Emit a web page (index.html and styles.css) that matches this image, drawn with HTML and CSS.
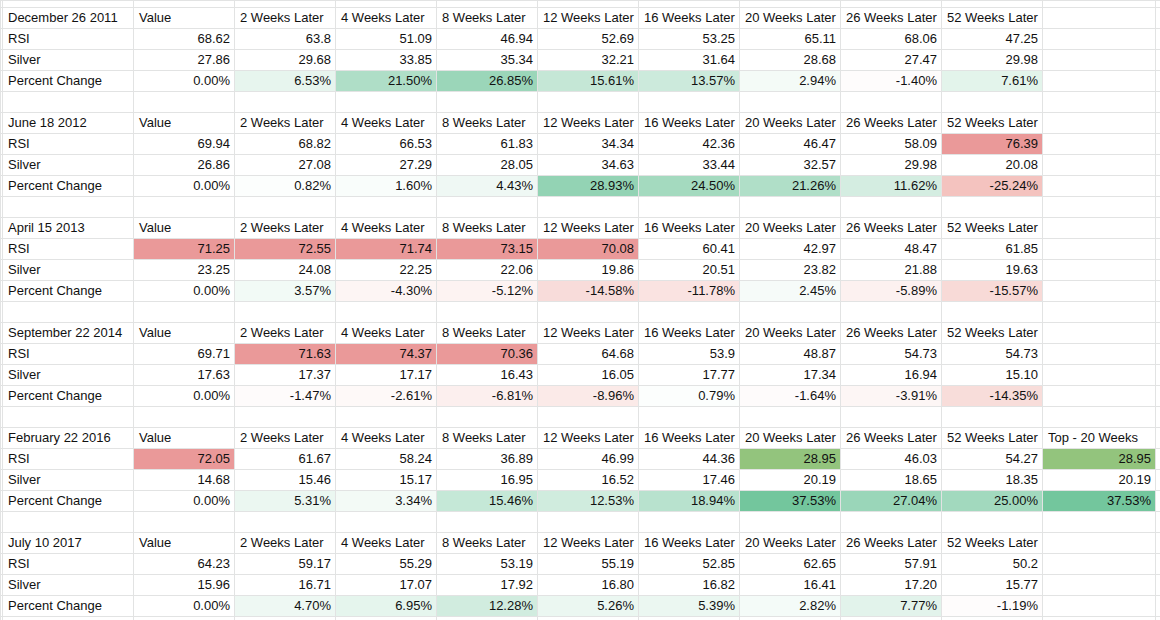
FILE: index.html
```html
<!DOCTYPE html>
<html>
<head>
<meta charset="utf-8">
<link rel="stylesheet" href="styles.css">
</head>
<body>
<div class="sheet">
<table class="grid">
<colgroup>
<col class="c-edge"><col class="c-label"><col class="c-num"><col class="c-num"><col class="c-num"><col class="c-num"><col class="c-num"><col class="c-num"><col class="c-num"><col class="c-num"><col class="c-num"><col class="c-wide"><col class="c-rest">
</colgroup>
<tbody>
<tr class="cut"><td></td><td></td><td></td><td></td><td></td><td></td><td></td><td></td><td></td><td></td><td></td><td></td><td></td></tr>

<tr><td></td><td>December 26 2011</td><td>Value</td><td>2 Weeks Later</td><td>4 Weeks Later</td><td>8 Weeks Later</td><td>12 Weeks Later</td><td>16 Weeks Later</td><td>20 Weeks Later</td><td>26 Weeks Later</td><td>52 Weeks Later</td><td></td><td></td></tr>
<tr><td></td><td>RSI</td><td class="n">68.62</td><td class="n">63.8</td><td class="n">51.09</td><td class="n">46.94</td><td class="n">52.69</td><td class="n">53.25</td><td class="n">65.11</td><td class="n">68.06</td><td class="n">47.25</td><td></td><td></td></tr>
<tr><td></td><td>Silver</td><td class="n">27.86</td><td class="n">29.68</td><td class="n">33.85</td><td class="n">35.34</td><td class="n">32.21</td><td class="n">31.64</td><td class="n">28.68</td><td class="n">27.47</td><td class="n">29.98</td><td></td><td></td></tr>
<tr><td></td><td>Percent Change</td><td class="n">0.00%</td><td class="n g" style="--g:14.5%">6.53%</td><td class="n g" style="--g:47.8%">21.50%</td><td class="n g" style="--g:59.7%">26.85%</td><td class="n g" style="--g:34.7%">15.61%</td><td class="n g" style="--g:30.2%">13.57%</td><td class="n g" style="--g:6.5%">2.94%</td><td class="n r" style="--r:2.5%">-1.40%</td><td class="n g" style="--g:16.9%">7.61%</td><td></td><td></td></tr>
<tr><td></td><td></td><td></td><td></td><td></td><td></td><td></td><td></td><td></td><td></td><td></td><td></td><td></td></tr>

<tr><td></td><td>June 18 2012</td><td>Value</td><td>2 Weeks Later</td><td>4 Weeks Later</td><td>8 Weeks Later</td><td>12 Weeks Later</td><td>16 Weeks Later</td><td>20 Weeks Later</td><td>26 Weeks Later</td><td>52 Weeks Later</td><td></td><td></td></tr>
<tr><td></td><td>RSI</td><td class="n">69.94</td><td class="n">68.82</td><td class="n">66.53</td><td class="n">61.83</td><td class="n">34.34</td><td class="n">42.36</td><td class="n">46.47</td><td class="n">58.09</td><td class="n hot">76.39</td><td></td><td></td></tr>
<tr><td></td><td>Silver</td><td class="n">26.86</td><td class="n">27.08</td><td class="n">27.29</td><td class="n">28.05</td><td class="n">34.63</td><td class="n">33.44</td><td class="n">32.57</td><td class="n">29.98</td><td class="n">20.08</td><td></td><td></td></tr>
<tr><td></td><td>Percent Change</td><td class="n">0.00%</td><td class="n g" style="--g:1.8%">0.82%</td><td class="n g" style="--g:3.6%">1.60%</td><td class="n g" style="--g:9.8%">4.43%</td><td class="n g" style="--g:64.3%">28.93%</td><td class="n g" style="--g:54.4%">24.50%</td><td class="n g" style="--g:47.2%">21.26%</td><td class="n g" style="--g:25.8%">11.62%</td><td class="n r" style="--r:45.9%">-25.24%</td><td></td><td></td></tr>
<tr><td></td><td></td><td></td><td></td><td></td><td></td><td></td><td></td><td></td><td></td><td></td><td></td><td></td></tr>

<tr><td></td><td>April 15 2013</td><td>Value</td><td>2 Weeks Later</td><td>4 Weeks Later</td><td>8 Weeks Later</td><td>12 Weeks Later</td><td>16 Weeks Later</td><td>20 Weeks Later</td><td>26 Weeks Later</td><td>52 Weeks Later</td><td></td><td></td></tr>
<tr><td></td><td>RSI</td><td class="n hot">71.25</td><td class="n hot">72.55</td><td class="n hot">71.74</td><td class="n hot">73.15</td><td class="n hot">70.08</td><td class="n">60.41</td><td class="n">42.97</td><td class="n">48.47</td><td class="n">61.85</td><td></td><td></td></tr>
<tr><td></td><td>Silver</td><td class="n">23.25</td><td class="n">24.08</td><td class="n">22.25</td><td class="n">22.06</td><td class="n">19.86</td><td class="n">20.51</td><td class="n">23.82</td><td class="n">21.88</td><td class="n">19.63</td><td></td><td></td></tr>
<tr><td></td><td>Percent Change</td><td class="n">0.00%</td><td class="n g" style="--g:7.9%">3.57%</td><td class="n r" style="--r:7.8%">-4.30%</td><td class="n r" style="--r:9.3%">-5.12%</td><td class="n r" style="--r:26.5%">-14.58%</td><td class="n r" style="--r:21.4%">-11.78%</td><td class="n g" style="--g:5.4%">2.45%</td><td class="n r" style="--r:10.7%">-5.89%</td><td class="n r" style="--r:28.3%">-15.57%</td><td></td><td></td></tr>
<tr><td></td><td></td><td></td><td></td><td></td><td></td><td></td><td></td><td></td><td></td><td></td><td></td><td></td></tr>

<tr><td></td><td>September 22 2014</td><td>Value</td><td>2 Weeks Later</td><td>4 Weeks Later</td><td>8 Weeks Later</td><td>12 Weeks Later</td><td>16 Weeks Later</td><td>20 Weeks Later</td><td>26 Weeks Later</td><td>52 Weeks Later</td><td></td><td></td></tr>
<tr><td></td><td>RSI</td><td class="n">69.71</td><td class="n hot">71.63</td><td class="n hot">74.37</td><td class="n hot">70.36</td><td class="n">64.68</td><td class="n">53.9</td><td class="n">48.87</td><td class="n">54.73</td><td class="n">54.73</td><td></td><td></td></tr>
<tr><td></td><td>Silver</td><td class="n">17.63</td><td class="n">17.37</td><td class="n">17.17</td><td class="n">16.43</td><td class="n">16.05</td><td class="n">17.77</td><td class="n">17.34</td><td class="n">16.94</td><td class="n">15.10</td><td></td><td></td></tr>
<tr><td></td><td>Percent Change</td><td class="n">0.00%</td><td class="n r" style="--r:2.7%">-1.47%</td><td class="n r" style="--r:4.7%">-2.61%</td><td class="n r" style="--r:12.4%">-6.81%</td><td class="n r" style="--r:16.3%">-8.96%</td><td class="n g" style="--g:1.8%">0.79%</td><td class="n r" style="--r:3%">-1.64%</td><td class="n r" style="--r:7.1%">-3.91%</td><td class="n r" style="--r:26.1%">-14.35%</td><td></td><td></td></tr>
<tr><td></td><td></td><td></td><td></td><td></td><td></td><td></td><td></td><td></td><td></td><td></td><td></td><td></td></tr>

<tr><td></td><td>February 22 2016</td><td>Value</td><td>2 Weeks Later</td><td>4 Weeks Later</td><td>8 Weeks Later</td><td>12 Weeks Later</td><td>16 Weeks Later</td><td>20 Weeks Later</td><td>26 Weeks Later</td><td>52 Weeks Later</td><td>Top - 20 Weeks</td><td></td></tr>
<tr><td></td><td>RSI</td><td class="n hot">72.05</td><td class="n">61.67</td><td class="n">58.24</td><td class="n">36.89</td><td class="n">46.99</td><td class="n">44.36</td><td class="n low">28.95</td><td class="n">46.03</td><td class="n">54.27</td><td class="n low">28.95</td><td></td></tr>
<tr><td></td><td>Silver</td><td class="n">14.68</td><td class="n">15.46</td><td class="n">15.17</td><td class="n">16.95</td><td class="n">16.52</td><td class="n">17.46</td><td class="n">20.19</td><td class="n">18.65</td><td class="n">18.35</td><td class="n">20.19</td><td></td></tr>
<tr><td></td><td>Percent Change</td><td class="n">0.00%</td><td class="n g" style="--g:11.8%">5.31%</td><td class="n g" style="--g:7.4%">3.34%</td><td class="n g" style="--g:34.4%">15.46%</td><td class="n g" style="--g:27.8%">12.53%</td><td class="n g" style="--g:42.1%">18.94%</td><td class="n g" style="--g:83.4%">37.53%</td><td class="n g" style="--g:60.1%">27.04%</td><td class="n g" style="--g:55.6%">25.00%</td><td class="n g" style="--g:83.4%">37.53%</td><td></td></tr>
<tr><td></td><td></td><td></td><td></td><td></td><td></td><td></td><td></td><td></td><td></td><td></td><td></td><td></td></tr>

<tr><td></td><td>July 10 2017</td><td>Value</td><td>2 Weeks Later</td><td>4 Weeks Later</td><td>8 Weeks Later</td><td>12 Weeks Later</td><td>16 Weeks Later</td><td>20 Weeks Later</td><td>26 Weeks Later</td><td>52 Weeks Later</td><td></td><td></td></tr>
<tr><td></td><td>RSI</td><td class="n">64.23</td><td class="n">59.17</td><td class="n">55.29</td><td class="n">53.19</td><td class="n">55.19</td><td class="n">52.85</td><td class="n">62.65</td><td class="n">57.91</td><td class="n">50.2</td><td></td><td></td></tr>
<tr><td></td><td>Silver</td><td class="n">15.96</td><td class="n">16.71</td><td class="n">17.07</td><td class="n">17.92</td><td class="n">16.80</td><td class="n">16.82</td><td class="n">16.41</td><td class="n">17.20</td><td class="n">15.77</td><td></td><td></td></tr>
<tr><td></td><td>Percent Change</td><td class="n">0.00%</td><td class="n g" style="--g:10.4%">4.70%</td><td class="n g" style="--g:15.4%">6.95%</td><td class="n g" style="--g:27.3%">12.28%</td><td class="n g" style="--g:11.7%">5.26%</td><td class="n g" style="--g:12%">5.39%</td><td class="n g" style="--g:6.3%">2.82%</td><td class="n g" style="--g:17.3%">7.77%</td><td class="n r" style="--r:2.2%">-1.19%</td><td></td><td></td></tr>
<tr><td></td><td></td><td></td><td></td><td></td><td></td><td></td><td></td><td></td><td></td><td></td><td></td><td></td></tr>
</tbody>
</table>
</div>
</body>
</html>
```

FILE: styles.css
```css
html, body {
  margin: 0;
  padding: 0;
  background: #fff;
}
body {
  width: 1160px;
  height: 620px;
  overflow: hidden;
}
.sheet {
  width: 1160px;
  height: 620px;
  overflow: hidden;
}
.grid {
  border-collapse: collapse;
  table-layout: fixed;
  width: 1185px;
  font-family: "Liberation Sans", Arial, sans-serif;
  font-size: 13px;
  color: #111;
}
.c-edge { width: 2px; }
.c-label { width: 131px; }
.c-num { width: 101px; }
.c-wide { width: 113px; }
.c-rest { width: 30px; }
.grid td {
  border: 1px solid #e2e3e3;
  height: 20px;
  padding: 0 4px 0 5px;
  white-space: nowrap;
  overflow: hidden;
  vertical-align: middle;
  line-height: 16px;
}
.grid tr.cut td {
  height: 6px;
  line-height: 0;
  padding: 0;
}
.grid td:first-child {
  padding: 0;
}
.n { text-align: right; }
.g { background: color-mix(in srgb, #57bb8a var(--g), #ffffff); }
.r { background: color-mix(in srgb, #e67c73 var(--r), #ffffff); }
.hot { background: #ea9999; }
.low { background: #93c47d; }
```
